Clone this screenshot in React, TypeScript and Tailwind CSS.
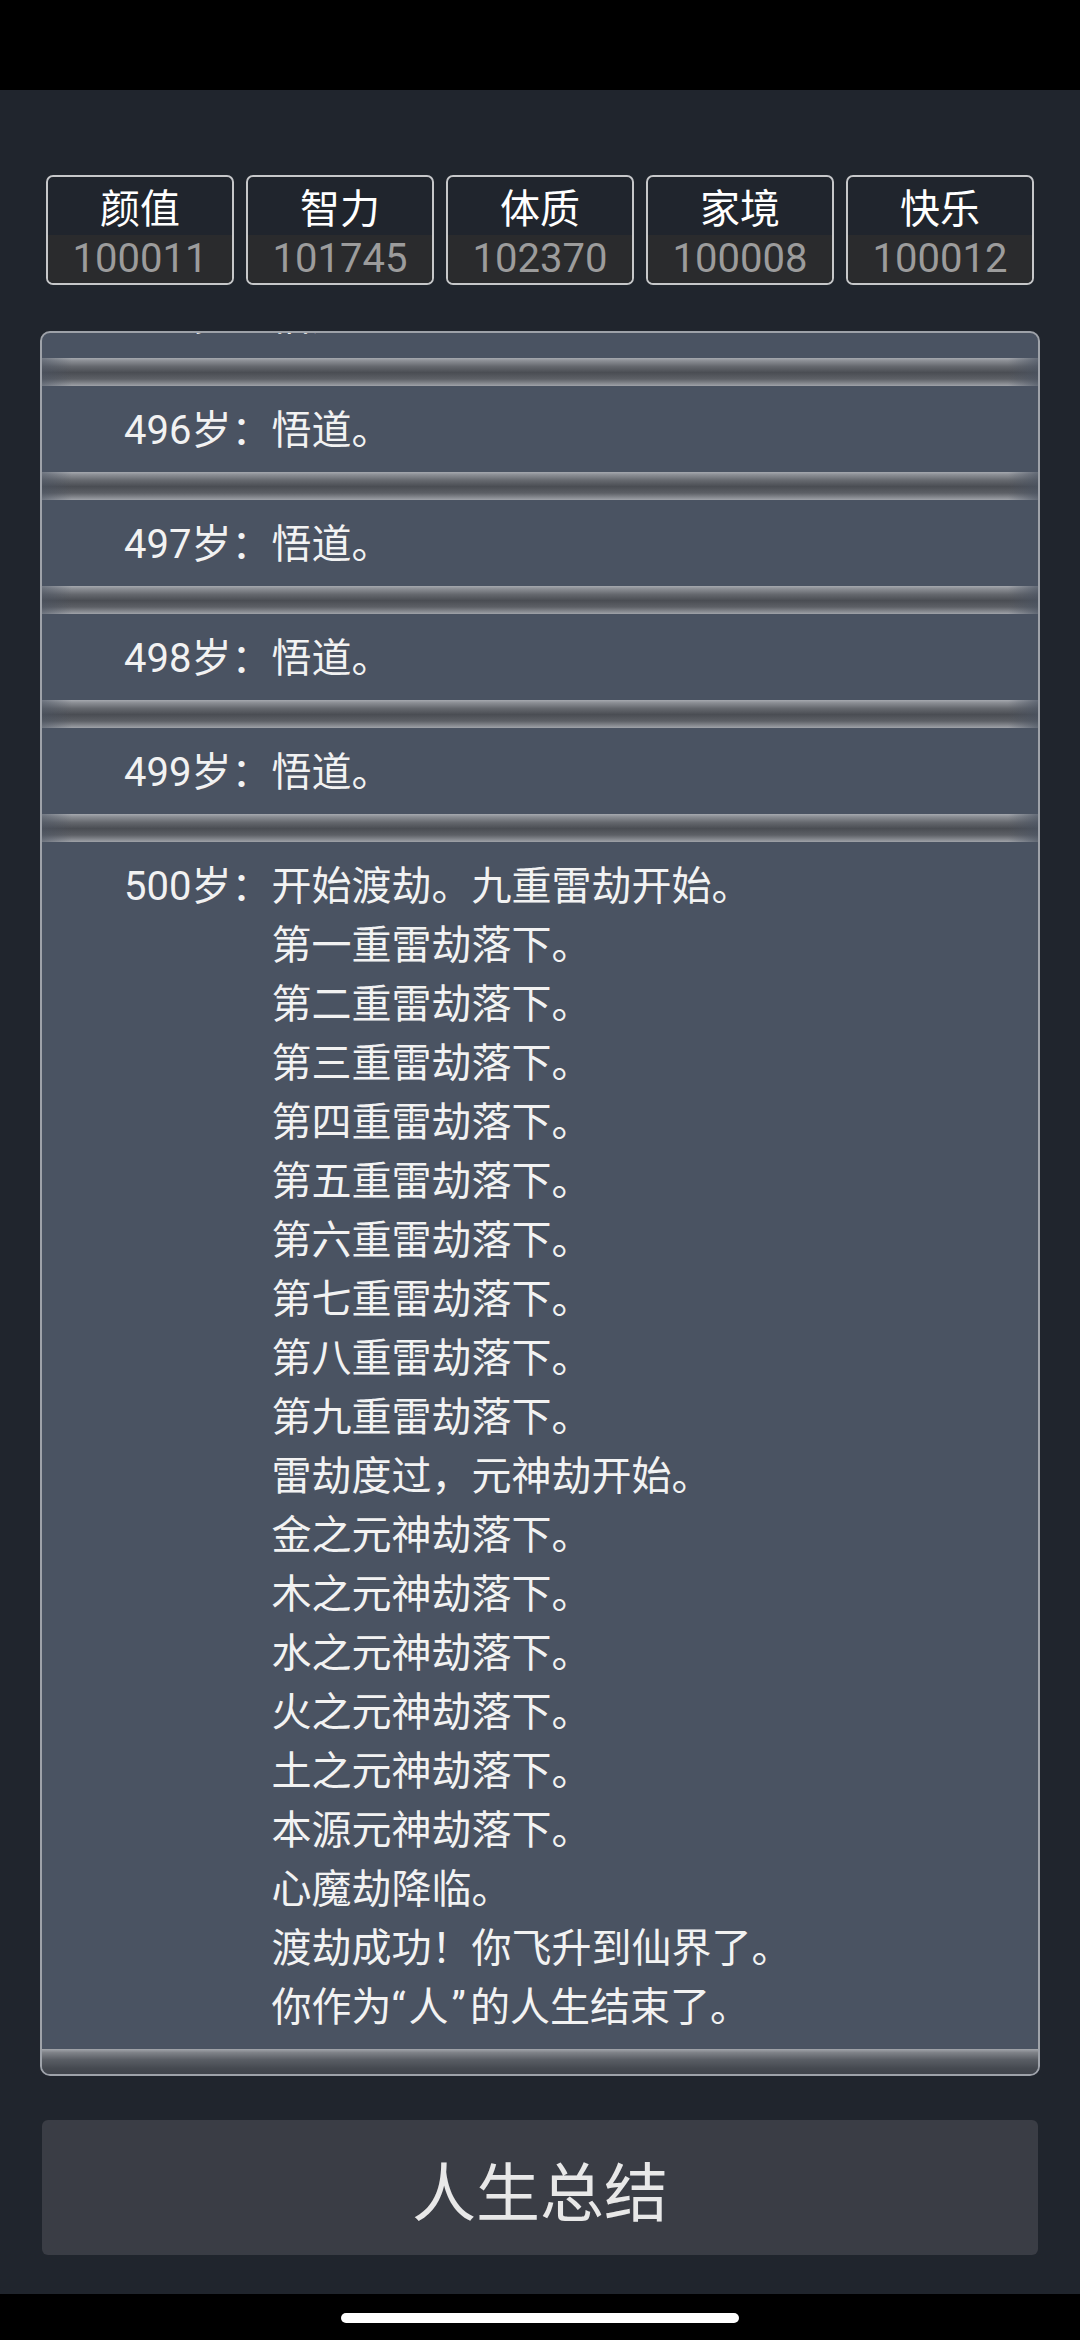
import React from 'react';

const stats = [
  { label: '颜值', value: '100011' },
  { label: '智力', value: '101745' },
  { label: '体质', value: '102370' },
  { label: '家境', value: '100008' },
  { label: '快乐', value: '100012' },
];

const lastEvent: React.ReactNode[] = [
  '开始渡劫。九重雷劫开始。',
  '第一重雷劫落下。',
  '第二重雷劫落下。',
  '第三重雷劫落下。',
  '第四重雷劫落下。',
  '第五重雷劫落下。',
  '第六重雷劫落下。',
  '第七重雷劫落下。',
  '第八重雷劫落下。',
  '第九重雷劫落下。',
  '雷劫度过，元神劫开始。',
  '金之元神劫落下。',
  '木之元神劫落下。',
  '水之元神劫落下。',
  '火之元神劫落下。',
  '土之元神劫落下。',
  '本源元神劫落下。',
  '心魔劫降临。',
  '渡劫成功！你飞升到仙界了。',
  <>你作为<span className="mr-[3px]">“</span>人<span className="ml-[3px] mr-[4px]">”</span>的人生结束了。</>,
];

const Divider = () => (
  <div className="h-[28px] shrink-0 bg-[image:linear-gradient(to_right,rgba(74,83,98,0.55),transparent_3%,transparent_97%,rgba(74,83,98,0.7)),linear-gradient(to_bottom,#a6a9af_0%,#8d9096_9%,#65686e_30%,#4a4d53_52%,#5d6066_75%,#8c8f95_93%,#a0a3a9_100%)]" />
);

const Row = ({ age, lines, className = '' }: { age: number; lines: React.ReactNode[]; className?: string }) => (
  <div className={`flex shrink-0 pl-[82px] pr-[20px] pt-[15px] pb-[12px] ${className}`}>
    <div className="shrink-0">{age}岁：</div>
    <div className="flex flex-col">
      {lines.map((l, i) => (
        <div key={i}>{l}</div>
      ))}
    </div>
  </div>
);

export default function App() {
  return (
    <div className="w-[1080px] h-[2340px] bg-[#20252d] flex flex-col font-['Roboto','Noto_Sans_CJK_SC',sans-serif] overflow-hidden">
      {/* status bar */}
      <div className="h-[90px] bg-black shrink-0" />

      {/* attributes */}
      <div className="mt-[85px] px-[46px] grid grid-cols-5 gap-[12px] shrink-0">
        {stats.map((s) => (
          <div key={s.label} className="h-[110px] border-2 border-[#c6c7c9] rounded-[7px] overflow-hidden flex flex-col">
            <div className="h-[58px] flex items-center justify-center text-white text-[40px] leading-none pt-[7px]">
              {s.label}
            </div>
            <div className="flex-1 bg-[#2a2b2d] flex items-center justify-center text-[#9c9c9c] text-[40px] leading-none">
              {s.value}
            </div>
          </div>
        ))}
      </div>

      {/* life log, scrolled to the end */}
      <div className="mt-[46px] mx-[40px] h-[1745px] shrink-0 border-2 border-[#9ea2a9] rounded-[10px] bg-[#4a5362] overflow-hidden flex flex-col text-[40px] leading-[59px] text-[#f2f2f2]">
        <Row age={495} lines={['悟道。']} className="-mt-[61px]" />
        <Divider />
        <Row age={496} lines={['悟道。']} />
        <Divider />
        <Row age={497} lines={['悟道。']} />
        <Divider />
        <Row age={498} lines={['悟道。']} />
        <Divider />
        <Row age={499} lines={['悟道。']} />
        <Divider />
        <Row age={500} lines={lastEvent} className="pb-[11px]" />
        <div className="h-[30px] shrink-0 bg-[linear-gradient(to_bottom,#a2a5ab_0%,#7f8288_12%,#5a5e65_35%,#454950_65%,#3c4048_100%)]" />
      </div>

      {/* summary button */}
      <button className="mt-[44px] mx-[42px] h-[135px] shrink-0 rounded-[6px] bg-[#3a3d45] text-[#e8e8e8] text-[64px] leading-none flex items-center justify-center font-['Noto_Sans_CJK_SC',sans-serif]">
        人生总结
      </button>

      <div className="flex-1" />

      {/* nav bar */}
      <div className="h-[46px] bg-black shrink-0 flex justify-center pt-[19px]">
        <div className="w-[398px] h-[10px] rounded-full bg-white" />
      </div>
    </div>
  );
}
